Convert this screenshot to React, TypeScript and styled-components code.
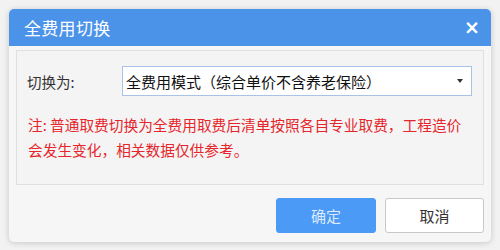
import React from "react";
import styled, { createGlobalStyle } from "styled-components";

const GlobalStyle = createGlobalStyle`
  html, body {
    margin: 0;
    padding: 0;
    background: #f2f2f2;
    font-family: "Noto Sans CJK SC", "Noto Sans", sans-serif;
  }
`;

const Page = styled.div`
  width: 500px;
  height: 250px;
  padding: 9px;
  box-sizing: border-box;
`;

const Dialog = styled.div`
  width: 482px;
  height: 233px;
  background: #f6f6f6;
  border-radius: 5px;
  box-shadow: 0 1px 6px rgba(0, 0, 0, 0.18);
  display: flex;
  flex-direction: column;
  overflow: hidden;
`;

const Header = styled.div`
  height: 37px;
  flex: none;
  background: #4b93e9;
  display: flex;
  align-items: center;
  justify-content: space-between;
  padding: 0 11px 0 15px;
  color: #fff;
`;

const Title = styled.span`
  font-size: 17px;
  letter-spacing: 0.3px;
`;

const Close = styled.span`
  font-family: "DejaVu Sans", sans-serif;
  font-size: 19px;
  font-weight: bold;
  line-height: 1;
  color: #fff;
`;

const Body = styled.div`
  padding: 4px 7px 0 7px;
`;

const Panel = styled.div`
  height: 135px;
  box-sizing: border-box;
  background: #f4f4f5;
  border: 1px solid #e0e0e0;
  padding: 15px 11px 0 10px;
`;

const Row = styled.div`
  display: flex;
  align-items: center;
`;

const Label = styled.span`
  width: 95px;
  font-size: 14.5px;
  color: #333;
`;

const Select = styled.div`
  flex: 1;
  height: 30px;
  box-sizing: border-box;
  background: #fff;
  border: 1px solid #a9c3e6;
  display: flex;
  align-items: center;
  justify-content: space-between;
  padding: 0 8px 0 3px;
  font-size: 15px;
  color: #111;
`;

const Caret = styled.span`
  width: 0;
  height: 0;
  border-left: 3.5px solid transparent;
  border-right: 3.5px solid transparent;
  border-top: 4px solid #333;
`;

const Note = styled.p`
  margin: 16px 0 0 1px;
  font-size: 14.7px;
  line-height: 25px;
  color: #e5262b;
`;

const Footer = styled.div`
  flex: 1;
  display: flex;
  justify-content: flex-end;
  align-items: flex-start;
  gap: 9px;
  padding: 13px 7px 0 0;
`;

const Button = styled.button<{ $primary?: boolean }>`
  width: ${(p) => (p.$primary ? "100px" : "99px")};
  height: 35px;
  border-radius: 3px;
  font-family: inherit;
  font-size: 15px;
  cursor: pointer;
  border: 1px solid ${(p) => (p.$primary ? "#4b9af6" : "#c8c8c8")};
  background: ${(p) => (p.$primary ? "#4b9af6" : "#fff")};
  color: ${(p) => (p.$primary ? "rgba(255,255,255,0.82)" : "#333")};
`;

export default function App() {
  return (
    <>
      <GlobalStyle />
      <Page>
        <Dialog>
          <Header>
            <Title>全费用切换</Title>
            <Close>×</Close>
          </Header>
          <Body>
            <Panel>
              <Row>
                <Label>切换为:</Label>
                <Select>
                  <span>全费用模式（综合单价不含养老保险）</span>
                  <Caret />
                </Select>
              </Row>
              <Note>
                注: 普通取费切换为全费用取费后清单按照各自专业取费，工程造价
                <br />
                会发生变化，相关数据仅供参考。
              </Note>
            </Panel>
          </Body>
          <Footer>
            <Button $primary>确定</Button>
            <Button>取消</Button>
          </Footer>
        </Dialog>
      </Page>
    </>
  );
}
